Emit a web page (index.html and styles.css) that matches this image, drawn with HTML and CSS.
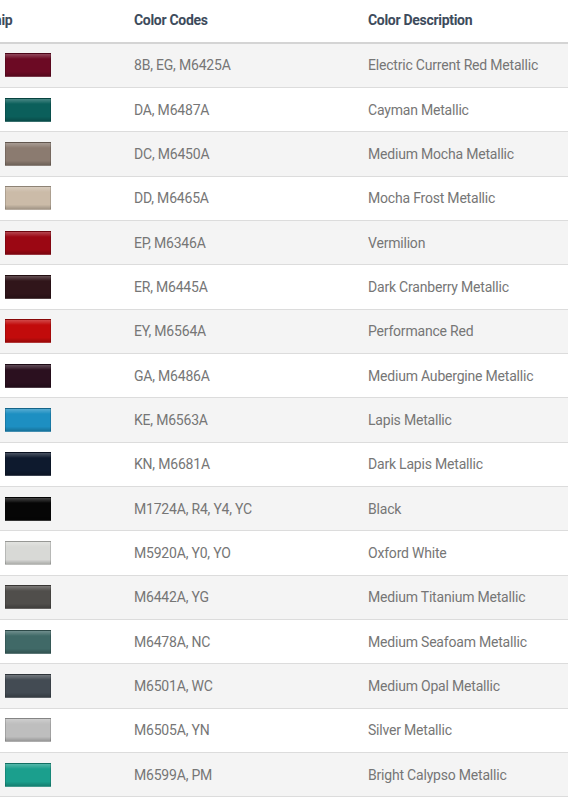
FILE: index.html
```html
<!DOCTYPE html>
<html lang="en">
<head>
    <meta charset="UTF-8">
    <meta name="viewport" content="width=device-width, initial-scale=1.0">
    <title>Paint Colors</title>
    <link rel="stylesheet" href="styles.css">
</head>
<body>
    <table class="color-table">
        <thead>
            <tr>
                <th class="col-chip">Chip</th>
                <th class="col-codes">Color Codes</th>
                <th>Color Description</th>
            </tr>
        </thead>
        <tbody>
            <tr><td><span class="chip chip-electric-red"></span></td><td>8B, EG, M6425A</td><td>Electric Current Red Metallic</td></tr>
            <tr><td><span class="chip chip-cayman"></span></td><td>DA, M6487A</td><td>Cayman Metallic</td></tr>
            <tr><td><span class="chip chip-mocha"></span></td><td>DC, M6450A</td><td>Medium Mocha Metallic</td></tr>
            <tr><td><span class="chip chip-mocha-frost"></span></td><td>DD, M6465A</td><td>Mocha Frost Metallic</td></tr>
            <tr><td><span class="chip chip-vermilion"></span></td><td>EP, M6346A</td><td>Vermilion</td></tr>
            <tr><td><span class="chip chip-cranberry"></span></td><td>ER, M6445A</td><td>Dark Cranberry Metallic</td></tr>
            <tr><td><span class="chip chip-perf-red"></span></td><td>EY, M6564A</td><td>Performance Red</td></tr>
            <tr><td><span class="chip chip-aubergine"></span></td><td>GA, M6486A</td><td>Medium Aubergine Metallic</td></tr>
            <tr><td><span class="chip chip-lapis"></span></td><td>KE, M6563A</td><td>Lapis Metallic</td></tr>
            <tr><td><span class="chip chip-dark-lapis"></span></td><td>KN, M6681A</td><td>Dark Lapis Metallic</td></tr>
            <tr><td><span class="chip chip-black"></span></td><td>M1724A, R4, Y4, YC</td><td>Black</td></tr>
            <tr><td><span class="chip chip-oxford"></span></td><td>M5920A, Y0, YO</td><td>Oxford White</td></tr>
            <tr><td><span class="chip chip-titanium"></span></td><td>M6442A, YG</td><td>Medium Titanium Metallic</td></tr>
            <tr><td><span class="chip chip-seafoam"></span></td><td>M6478A, NC</td><td>Medium Seafoam Metallic</td></tr>
            <tr><td><span class="chip chip-opal"></span></td><td>M6501A, WC</td><td>Medium Opal Metallic</td></tr>
            <tr><td><span class="chip chip-silver"></span></td><td>M6505A, YN</td><td>Silver Metallic</td></tr>
            <tr><td><span class="chip chip-calypso"></span></td><td>M6599A, PM</td><td>Bright Calypso Metallic</td></tr>
        </tbody>
    </table>
</body>
</html>
```

FILE: styles.css
```css
/* base */
* {
    margin: 0;
    padding: 0;
    box-sizing: border-box;
}

body {
    background: #fff;
    font-family: Roboto, "Liberation Sans", sans-serif;
    overflow: hidden;
}

.color-table {
    width: 600px;
    margin-left: -16px;
    border-collapse: collapse;
    table-layout: fixed;
}

.color-table th,
.color-table td {
    text-align: left;
    padding: 0 10px;
    vertical-align: middle;
}

.color-table th {
    height: 43px;
    font-size: 14px;
    font-weight: 700;
    letter-spacing: -0.3px;
    color: #3d4b5c;
    border-bottom: 2px solid #d4d4d4;
    padding-bottom: 2px;
}

/* the chip heading is partly scrolled out on the left */
.color-table th.col-chip {
    width: 140px;
    padding-left: 1px;
}

.col-codes {
    width: 234px;
}

.color-table td {
    height: 44.35px;
    font-size: 14px;
    letter-spacing: -0.2px;
    color: #767676;
    border-bottom: 1px solid #dcdcdc;
}

.color-table tbody tr:nth-child(odd) {
    background: #f4f4f4;
}

.chip {
    display: block;
    width: 46px;
    height: 24px;
    margin-left: 11px;
    border: 1px solid rgba(0, 0, 0, 0.15);
    background-image: linear-gradient(to bottom, rgba(255, 255, 255, 0.25) 0, rgba(255, 255, 255, 0.1) 3px, rgba(0, 0, 0, 0) 5px, rgba(0, 0, 0, 0) 80%, rgba(0, 0, 0, 0.2) 100%);
}

.chip-electric-red { background-color: #6c0a24; }
.chip-cayman { background-color: #0b5f5b; }
.chip-mocha { background-color: #8b7b70; }
.chip-mocha-frost { background-color: #cbbba8; }
.chip-vermilion { background-color: #9b0713; }
.chip-cranberry { background-color: #30151a; }
.chip-perf-red { background-color: #c20b0b; }
.chip-aubergine { background-color: #2b101f; }
.chip-lapis { background-color: #1d8fc2; }
.chip-dark-lapis { background-color: #0e1a2e; }
.chip-black { background-color: #060606; }
.chip-oxford { background-color: #d8d9d6; }
.chip-titanium { background-color: #504e4b; }
.chip-seafoam { background-color: #406967; }
.chip-opal { background-color: #434b53; }
.chip-silver { background-color: #bebebe; }
.chip-calypso { background-color: #1b9f8d; }
```
